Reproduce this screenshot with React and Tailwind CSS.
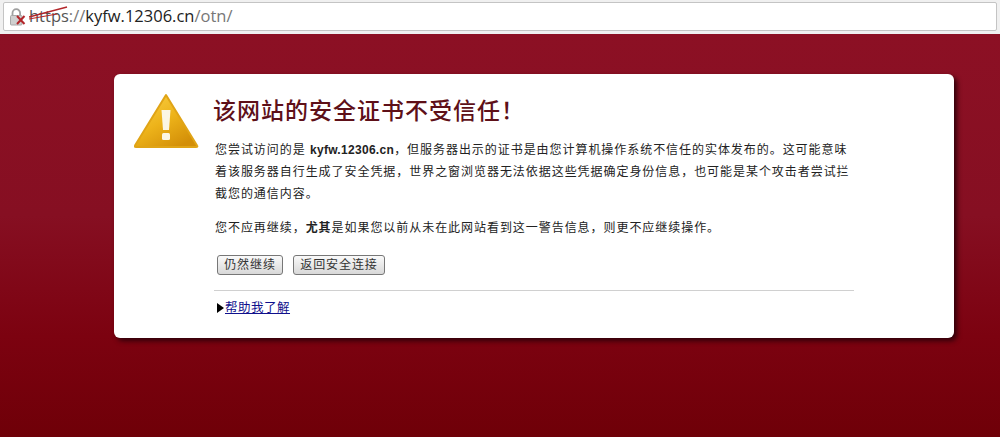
import React from "react";

const sans = "font-['Liberation_Sans','Noto_Sans_CJK_SC',sans-serif]";

function LockIcon() {
  return (
    <svg width="18" height="20" viewBox="0 0 18 20" className="shrink-0">
      <path d="M3.5 9V6a3.8 3.8 0 0 1 7.6 0V9" fill="none" stroke="#a0a0a0" strokeWidth="1.8" />
      <rect x="1.5" y="8.5" width="11.5" height="9.5" rx="1" fill="#cfcfcf" stroke="#a8a8a8" />
      <path d="M8 9l7.5 8M15.5 9l-7.5 8" stroke="#b3262a" strokeWidth="2" />
    </svg>
  );
}

function WarningIcon() {
  return (
    <svg width="66" height="56" viewBox="0 0 66 56" className="shrink-0">
      <defs>
        <linearGradient id="warn" x1="0" y1="0" x2="0.7" y2="1">
          <stop offset="0" stopColor="#fbd24a" />
          <stop offset="0.55" stopColor="#edb31a" />
          <stop offset="1" stopColor="#d38f08" />
        </linearGradient>
      </defs>
      <path d="M32 2 63 52.5Q64 54 62 54H2Q0 54 1 52.5Z" fill="url(#warn)" stroke="#e0a416" strokeLinejoin="round" strokeWidth="2" />
      <path d="M27.5 17h9l-1.5 20h-6Z" fill="#fbf6e4" />
      <rect x="28" y="40" width="8" height="7" rx="1.5" fill="#fbf6e4" />
    </svg>
  );
}

export default function App() {
  return (
    <div className={`${sans} w-[1000px] h-[437px] overflow-hidden flex flex-col bg-white`}>
      {/* Address bar */}
      <div className="h-[34px] shrink-0 bg-[#f0f0f0] pt-[2px] pl-[3px] pr-[3px]">
        <div className="h-[29px] bg-white border border-[#c4c4c4] rounded-[2px] flex items-center pl-[5px] gap-[2px]">
          <LockIcon />
          <div className="text-[16.5px] leading-none font-['Open_Sans','Liberation_Sans',sans-serif] text-[#777]">
            <span className="relative text-[#555]">
              https
              <svg width="40" height="14" viewBox="0 0 40 14" className="absolute left-0 top-[2px]">
                <path d="M0 11 38 1" stroke="#b3262a" strokeWidth="1.5" fill="none" />
                <path d="M0 13 28 8" stroke="#b3262a" strokeWidth="1.2" fill="none" />
              </svg>
            </span>
            ://<span className="text-[#222]">kyfw.12306.cn</span>/otn/
          </div>
        </div>
      </div>

      {/* Page */}
      <div className="flex-1 bg-[linear-gradient(180deg,#8c1024_0%,#860f22_45%,#7c0210_75%,#6f0008_100%)] pt-[40px] pl-[114px]">
        <div className="w-[840px] h-[264px] bg-white rounded-[6px] shadow-[3px_3px_5px_#30000a] flex pt-[19px] pl-[20px]">
          <WarningIcon />
          <div className="ml-[15px] w-[640px]">
            <h1 className="ml-[-2px] text-[23px] leading-[32px] tracking-[1px] font-['Noto_Sans_CJK_SC',serif] font-medium text-[#5e1018]">
              该网站的安全证书不受信任！
            </h1>
            <p className="mt-[14px] text-[12px] leading-[22px] tracking-[0.95px] text-[#222]">
              您尝试访问的是 <b className="tracking-[0.3px]">kyfw.12306.cn</b>，但服务器出示的证书是由您计算机操作系统不信任的实体发布的。这可能意味着该服务器自行生成了安全凭据，世界之窗浏览器无法依据这些凭据确定身份信息，也可能是某个攻击者尝试拦截您的通信内容。
            </p>
            <p className="mt-[12px] text-[12px] leading-[22px] tracking-[0.95px] text-[#222]">
              您不应再继续，<b>尤其</b>是如果您以前从未在此网站看到这一警告信息，则更不应继续操作。
            </p>
            <div className="mt-[16px] ml-[2px] flex gap-[10px]">
              <button className="w-[66px] h-[20px] rounded-[3px] border border-[#777] bg-[linear-gradient(180deg,#fafafa,#d8d8d8)] text-[12px] leading-none tracking-[0.9px] text-[#333]">
                仍然继续
              </button>
              <button className="w-[92px] h-[20px] rounded-[3px] border border-[#777] bg-[linear-gradient(180deg,#fafafa,#d8d8d8)] text-[12px] leading-none tracking-[0.9px] text-[#333]">
                返回安全连接
              </button>
            </div>
            <div className="mt-[15px] ml-[-1px] w-[640px] border-t border-[#d0d0d0]" />
            <div className="mt-[9px] ml-[2px] flex items-center gap-[1px]">
              <span className="w-0 h-0 border-y-[5px] border-y-transparent border-l-[7px] border-l-black" />
              <a href="#" className="text-[12.5px] leading-[16px] tracking-[0.5px] text-[#10108c] underline">
                帮助我了解
              </a>
            </div>
          </div>
        </div>
      </div>
    </div>
  );
}
